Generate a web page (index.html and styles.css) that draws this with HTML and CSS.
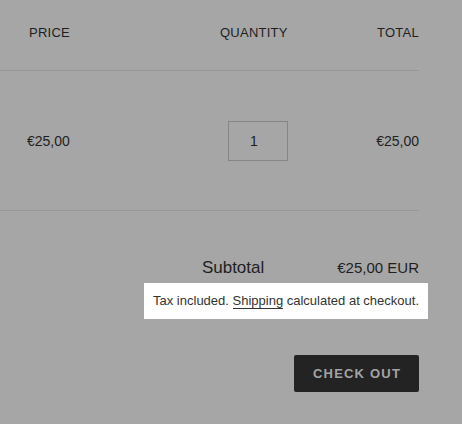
FILE: index.html
```html
<!DOCTYPE html>
<html>
<head>
<meta charset="utf-8">
<link rel="stylesheet" href="styles.css">
</head>
<body>
<div class="cart">
  <div class="cart-head">
    <div class="col-price">Price</div>
    <div class="col-qty">Quantity</div>
    <div class="col-total">Total</div>
  </div>
  <div class="cart-row">
    <div class="col-price">€25,00</div>
    <div class="col-qty"><div class="qty-box">1</div></div>
    <div class="col-total">€25,00</div>
  </div>
  <div class="cart-footer">
    <div class="subtotal">
      <span class="subtotal-label">Subtotal</span>
      <span class="subtotal-value">€25,00 EUR</span>
    </div>
    <div class="note-wrap">
      <p class="note">Tax included. <a class="note-link" href="#">Shipping</a> calculated at checkout.</p>
    </div>
    <div class="actions">
      <button class="checkout">Check out</button>
    </div>
  </div>
</div>
</body>
</html>
```

FILE: styles.css
```css
html, body {
  margin: 0;
  padding: 0;
}
body {
  background: #a6a6a6;
  font-family: "Liberation Sans", Arial, sans-serif;
  color: #1f1f1f;
  width: 462px;
  height: 424px;
  overflow: hidden;
}
.cart {
  width: 419px;
}
.cart-head,
.cart-row {
  display: grid;
  grid-template-columns: 191px 1fr auto;
  padding-left: 29px;
  border-bottom: 1px solid #979797;
}
.cart-head {
  height: 45px;
  padding-top: 25px;
  font-size: 13px;
  line-height: 15px;
  text-transform: uppercase;
  letter-spacing: 0.25px;
}
.cart-row {
  height: 139px;
  align-items: center;
  font-size: 14px;
  line-height: 16px;
}
.cart-row .col-price {
  margin-left: -2px;
}
.col-total {
  text-align: right;
}
.qty-box {
  margin-left: 8px;
  width: 58px;
  height: 38px;
  border: 1px solid #858585;
  display: flex;
  align-items: center;
  justify-content: center;
  font-size: 14px;
  padding-right: 0;
  box-sizing: content-box;
}
.qty-box {
  padding-right: 8px;
  width: 50px;
}
.cart-footer {
  display: flex;
  flex-direction: column;
  align-items: flex-end;
}
.subtotal {
  margin-top: 47px;
  display: flex;
  align-items: baseline;
  gap: 73px;
}
.subtotal-label {
  font-size: 17px;
  line-height: 20px;
}
.subtotal-value {
  font-size: 15px;
  line-height: 20px;
}
.note-wrap {
  margin-top: 5px;
  margin-right: -9px;
  background: #ffffff;
  padding: 9px 9px;
}
.note {
  margin: 0;
  font-size: 13px;
  line-height: 18px;
  color: #333333;
}
.note-link {
  color: #333333;
  text-decoration: none;
  border-bottom: 1px solid #333333;
}
.actions {
  margin-top: 36px;
}
.checkout {
  width: 125px;
  height: 37px;
  background: #232323;
  border: none;
  border-radius: 2px;
  color: #a3a3a3;
  font-family: "Liberation Sans", Arial, sans-serif;
  font-weight: bold;
  font-size: 13px;
  letter-spacing: 1.2px;
  text-transform: uppercase;
  padding: 0 0 0 1px;
}
```
